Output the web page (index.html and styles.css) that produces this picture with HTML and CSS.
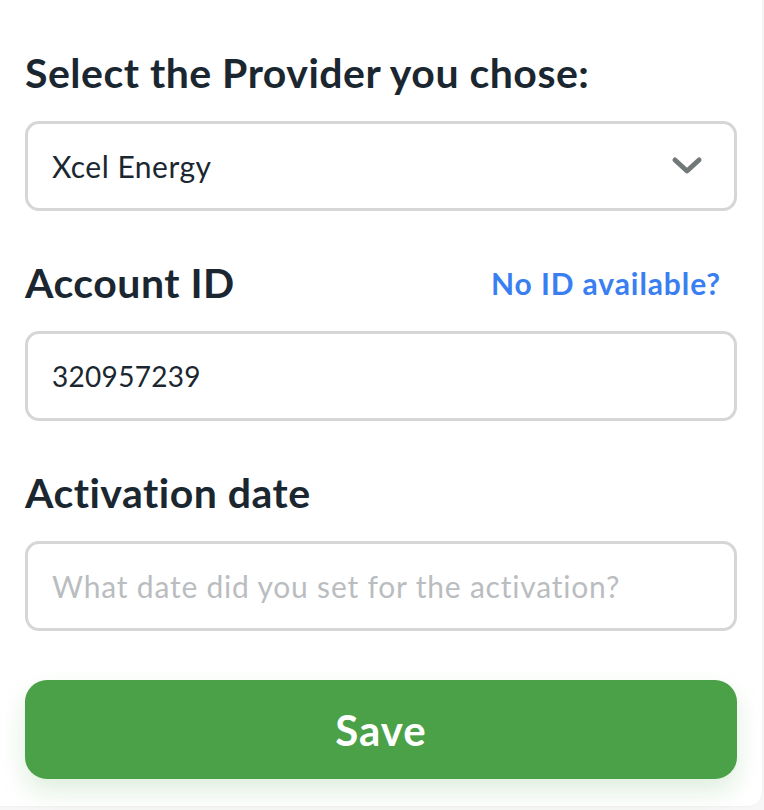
FILE: index.html
```html
<!DOCTYPE html>
<html lang="en">
<head>
<meta charset="utf-8">
<title>Provider</title>
<link rel="stylesheet" href="styles.css">
</head>
<body>
<main class="card">
  <form class="form">
    <div class="field">
      <label class="label" for="provider">Select the Provider you chose:</label>
      <div class="control select">
        <span class="value">Xcel Energy</span>
        <svg class="chevron" width="32" height="20" viewBox="0 0 32 20" aria-hidden="true">
          <path d="M4 4 L16 15 L28 4" fill="none" stroke="#72787a" stroke-width="5" stroke-linecap="round" stroke-linejoin="round"/>
        </svg>
      </div>
    </div>
    <div class="field">
      <div class="label-row">
        <label class="label" for="account">Account ID</label>
        <a class="link" href="#">No ID available?</a>
      </div>
      <div class="control"><span class="value number">320957239</span></div>
    </div>
    <div class="field">
      <label class="label" for="date">Activation date</label>
      <div class="control"><span class="placeholder">What date did you set for the activation?</span></div>
    </div>
    <button type="button" class="save">Save</button>
  </form>
</main>
</body>
</html>
```
FILE: styles.css
```css
* { box-sizing: border-box; }
html, body { margin: 0; padding: 0; }
body {
  background: #f7f7f7;
  font-family: "Lato", "Noto Sans", sans-serif;
  width: 764px;
  height: 810px;
  overflow: hidden;
}
.card {
  width: 762px;
  height: 806px;
  background: #ffffff;
  border-radius: 0 0 14px 0;
  box-shadow: 0 0 3px rgba(0,0,0,0.06);
  padding: 51px 25px 0 25px;
}
.form {
  display: flex;
  flex-direction: column;
  gap: 50px;
}
.field {
  display: flex;
  flex-direction: column;
  gap: 26px;
}
.label-row {
  display: flex;
  justify-content: space-between;
  align-items: center;
  padding-right: 16px;
}
.label {
  font-size: 41px;
  line-height: 44px;
  font-weight: 700;
  letter-spacing: 0.5px;
  color: #1b2730;
}
.link {
  font-size: 30px;
  font-weight: 700;
  letter-spacing: 0.9px;
  color: #3a7ff2;
  text-decoration: none;
}
.control {
  height: 90px;
  border: 3px solid #d5d6d7;
  border-radius: 14px;
  display: flex;
  align-items: center;
  justify-content: space-between;
  padding: 0 31px 0 24px;
  font-size: 30px;
  letter-spacing: 0.5px;
}
.value { color: #1b2730; }
.number { font-size: 28px; letter-spacing: 0.3px; }
.placeholder { color: #babdbf; letter-spacing: 0.8px; }
.chevron { display: block; }
.save {
  margin-top: -1px;
  height: 99px;
  border: 0;
  border-radius: 22px;
  background: #4aa147;
  color: #ffffff;
  font-family: inherit;
  font-size: 42px;
  font-weight: 700;
  letter-spacing: 1px;
  box-shadow: 0 12px 26px rgba(74,161,71,0.18);
  cursor: pointer;
}
```
